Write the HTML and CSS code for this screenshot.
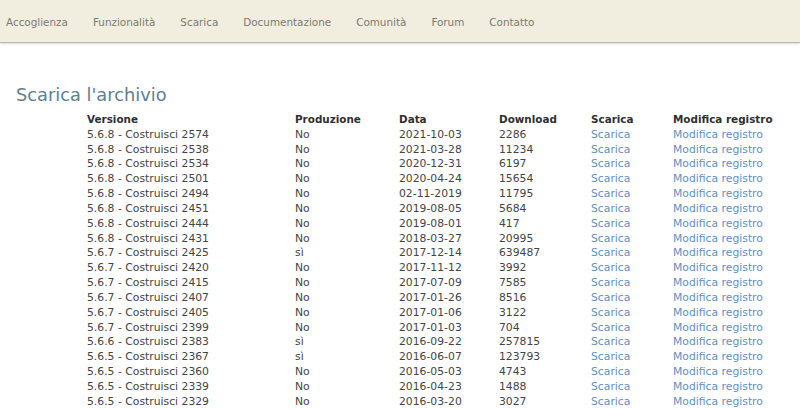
FILE: index.html
```html
<!DOCTYPE html>
<html lang="it">
<head>
<meta charset="utf-8">
<title>Scarica l'archivio</title>
<link rel="stylesheet" href="styles.css">
</head>
<body>
<nav class="topnav">
  <a href="#">Accoglienza</a>
  <a href="#">Funzionalità</a>
  <a href="#">Scarica</a>
  <a href="#">Documentazione</a>
  <a href="#">Comunità</a>
  <a href="#">Forum</a>
  <a href="#">Contatto</a>
</nav>
<main class="content">
  <h1 class="title">Scarica l'archivio</h1>
  <table class="archive">
    <colgroup>
      <col class="c-ver"><col class="c-prod"><col class="c-data"><col class="c-dl"><col class="c-sc"><col class="c-mod">
    </colgroup>
    <thead>
      <tr><th>Versione</th><th>Produzione</th><th>Data</th><th>Download</th><th>Scarica</th><th>Modifica registro</th></tr>
    </thead>
    <tbody>
      <tr><td>5.6.8 - Costruisci 2574</td><td>No</td><td>2021-10-03</td><td>2286</td><td><a href="#">Scarica</a></td><td><a href="#">Modifica registro</a></td></tr>
      <tr><td>5.6.8 - Costruisci 2538</td><td>No</td><td>2021-03-28</td><td>11234</td><td><a href="#">Scarica</a></td><td><a href="#">Modifica registro</a></td></tr>
      <tr><td>5.6.8 - Costruisci 2534</td><td>No</td><td>2020-12-31</td><td>6197</td><td><a href="#">Scarica</a></td><td><a href="#">Modifica registro</a></td></tr>
      <tr><td>5.6.8 - Costruisci 2501</td><td>No</td><td>2020-04-24</td><td>15654</td><td><a href="#">Scarica</a></td><td><a href="#">Modifica registro</a></td></tr>
      <tr><td>5.6.8 - Costruisci 2494</td><td>No</td><td>02-11-2019</td><td>11795</td><td><a href="#">Scarica</a></td><td><a href="#">Modifica registro</a></td></tr>
      <tr><td>5.6.8 - Costruisci 2451</td><td>No</td><td>2019-08-05</td><td>5684</td><td><a href="#">Scarica</a></td><td><a href="#">Modifica registro</a></td></tr>
      <tr><td>5.6.8 - Costruisci 2444</td><td>No</td><td>2019-08-01</td><td>417</td><td><a href="#">Scarica</a></td><td><a href="#">Modifica registro</a></td></tr>
      <tr><td>5.6.8 - Costruisci 2431</td><td>No</td><td>2018-03-27</td><td>20995</td><td><a href="#">Scarica</a></td><td><a href="#">Modifica registro</a></td></tr>
      <tr><td>5.6.7 - Costruisci 2425</td><td>sì</td><td>2017-12-14</td><td>639487</td><td><a href="#">Scarica</a></td><td><a href="#">Modifica registro</a></td></tr>
      <tr><td>5.6.7 - Costruisci 2420</td><td>No</td><td>2017-11-12</td><td>3992</td><td><a href="#">Scarica</a></td><td><a href="#">Modifica registro</a></td></tr>
      <tr><td>5.6.7 - Costruisci 2415</td><td>No</td><td>2017-07-09</td><td>7585</td><td><a href="#">Scarica</a></td><td><a href="#">Modifica registro</a></td></tr>
      <tr><td>5.6.7 - Costruisci 2407</td><td>No</td><td>2017-01-26</td><td>8516</td><td><a href="#">Scarica</a></td><td><a href="#">Modifica registro</a></td></tr>
      <tr><td>5.6.7 - Costruisci 2405</td><td>No</td><td>2017-01-06</td><td>3122</td><td><a href="#">Scarica</a></td><td><a href="#">Modifica registro</a></td></tr>
      <tr><td>5.6.7 - Costruisci 2399</td><td>No</td><td>2017-01-03</td><td>704</td><td><a href="#">Scarica</a></td><td><a href="#">Modifica registro</a></td></tr>
      <tr><td>5.6.6 - Costruisci 2383</td><td>sì</td><td>2016-09-22</td><td>257815</td><td><a href="#">Scarica</a></td><td><a href="#">Modifica registro</a></td></tr>
      <tr><td>5.6.5 - Costruisci 2367</td><td>sì</td><td>2016-06-07</td><td>123793</td><td><a href="#">Scarica</a></td><td><a href="#">Modifica registro</a></td></tr>
      <tr><td>5.6.5 - Costruisci 2360</td><td>No</td><td>2016-05-03</td><td>4743</td><td><a href="#">Scarica</a></td><td><a href="#">Modifica registro</a></td></tr>
      <tr><td>5.6.5 - Costruisci 2339</td><td>No</td><td>2016-04-23</td><td>1488</td><td><a href="#">Scarica</a></td><td><a href="#">Modifica registro</a></td></tr>
      <tr><td>5.6.5 - Costruisci 2329</td><td>No</td><td>2016-03-20</td><td>3027</td><td><a href="#">Scarica</a></td><td><a href="#">Modifica registro</a></td></tr>
    </tbody>
  </table>
</main>
</body>
</html>
```
FILE: styles.css
```css
html, body {
  margin: 0;
  padding: 0;
  background: #ffffff;
}
body {
  font-family: "DejaVu Sans", Verdana, sans-serif;
  color: #3a3a3a;
}
.topnav {
  display: flex;
  align-items: center;
  gap: 25px;
  height: 43px;
  padding: 2px 0 0 6px;
  box-sizing: border-box;
  background: #f1eee0;
  border-bottom: 1px solid #b9b8b2;
  box-shadow: 0 1px 2px rgba(0,0,0,0.15);
}
.topnav a {
  font-size: 10.4px;
  color: #7a7a72;
  text-decoration: none;
}
.content {
  padding: 0 0 0 16px;
}
.title {
  margin: 40px 0 0 0;
  font-size: 17.8px;
  font-weight: normal;
  color: #5f7f8e;
  line-height: 24px;
}
.archive {
  margin-left: 71px;
  margin-top: 5px;
  border-collapse: collapse;
  table-layout: fixed;
  width: 713px;
  font-size: 10.8px;
  line-height: 14.83px;
}
.archive th, .archive td {
  padding: 0;
  text-align: left;
  white-space: nowrap;
}
.archive th {
  font-weight: bold;
  font-size: 10.4px;
  line-height: 15.8px;
  color: #2f2f2f;
}
.archive td {
  color: #444444;
}
.archive a {
  color: #6290bd;
  text-decoration: none;
}
.c-ver { width: 208px; }
.c-prod { width: 104px; }
.c-data { width: 100px; }
.c-dl { width: 92px; }
.c-sc { width: 82px; }
.c-mod { width: 127px; }
```
